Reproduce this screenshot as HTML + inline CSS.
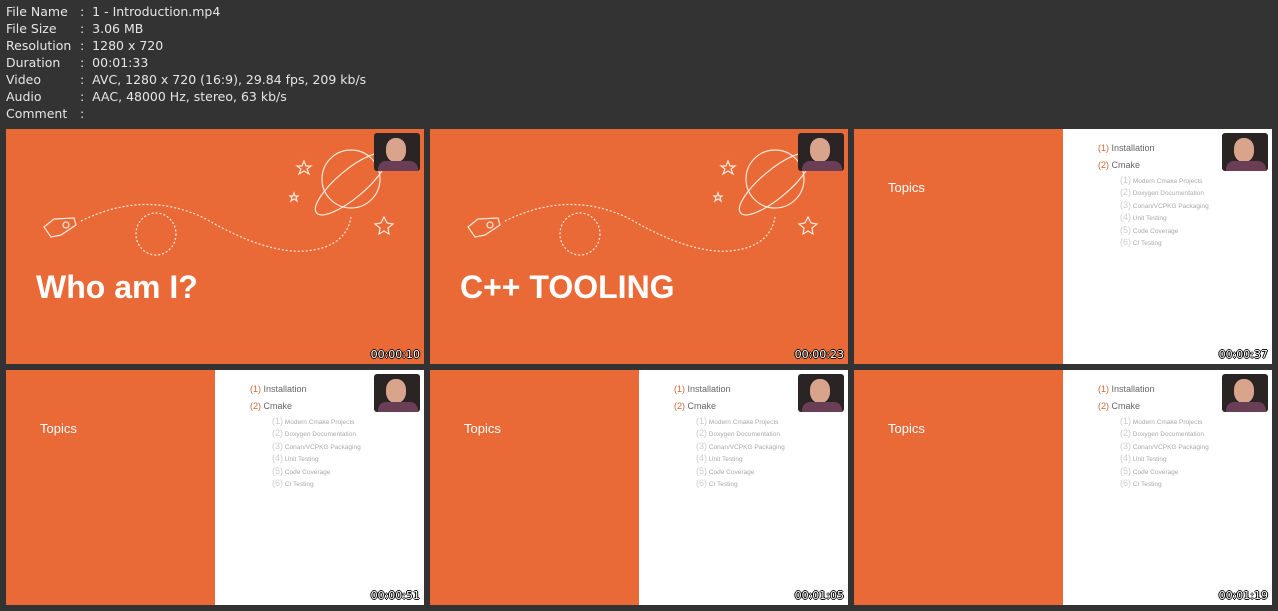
<!DOCTYPE html>
<html><head><meta charset="utf-8"><style>
body{margin:0;width:1278px;height:611px;background:#333333;overflow:hidden;font-family:"DejaVu Sans","Liberation Sans",sans-serif;position:relative}
.h{position:absolute;left:6px;color:#e6e6e6;font-size:12.5px;line-height:17px;white-space:pre}
.h span{position:absolute;left:74px}
.t{position:absolute;width:418px;height:235px;background:#e96a36;overflow:hidden}
.w{position:absolute;left:209px;top:0;width:209px;height:235px;background:#fff}
.cam{position:absolute;left:368px;top:4px;width:46px;height:38px;border-radius:3px;background:#2a2424;overflow:hidden}
.ts{position:absolute;right:4px;bottom:3px;color:#fff;font-size:11px;font-family:"DejaVu Sans","Liberation Sans",sans-serif;text-shadow:-1px 0 #000,1px 0 #000,0 1px #000,0 -1px #000}
.big{position:absolute;left:30px;top:140px;color:#fff;font-size:32px;font-weight:bold;font-family:"Liberation Sans",sans-serif}
.tp{position:absolute;left:34px;top:51px;color:#fff;font-size:13px;font-family:"Liberation Sans",sans-serif}
.l{position:absolute;font-size:9px;color:#666;white-space:nowrap;font-family:"Liberation Sans",sans-serif}
.l b{color:#d0663a;font-weight:normal}
.s{position:absolute;font-size:6.5px;color:#aaa;white-space:nowrap;font-family:"Liberation Sans",sans-serif}
.s i{font-style:normal;font-size:9px;color:#ccc}
</style></head><body>
<div class="h" style="top:3px">File Name<span>:  1 - Introduction.mp4</span></div>
<div class="h" style="top:20px">File Size<span>:  3.06 MB</span></div>
<div class="h" style="top:37px">Resolution<span>:  1280 x 720</span></div>
<div class="h" style="top:54px">Duration<span>:  00:01:33</span></div>
<div class="h" style="top:71px">Video<span>:  AVC, 1280 x 720 (16:9), 29.84 fps, 209 kb/s</span></div>
<div class="h" style="top:88px">Audio<span>:  AAC, 48000 Hz, stereo, 63 kb/s</span></div>
<div class="h" style="top:105px">Comment<span>:</span></div>

<div class="t" style="left:6px;top:129px">
<svg width="418" height="235" style="position:absolute;left:0;top:0" fill="none" stroke="#fde9dd" stroke-width="1.2">
<path d="M75 92 Q140 60 200 90 Q260 125 300 122 Q340 118 345 88" stroke-dasharray="2 2"/>
<ellipse cx="150" cy="105" rx="20" ry="21" stroke-dasharray="2 2"/>
<path d="M38 98 L48 90 L68 89 L70 96 L55 106 L45 108 Z"/><circle cx="60" cy="96" r="3"/>
<circle cx="345" cy="50" r="29"/><ellipse cx="345" cy="55" rx="45" ry="14" transform="rotate(-40 345 55)"/>
<path d="M298 32 l2 5 5 0 -4 3 2 5 -5 -3 -5 3 2 -5 -4 -3 5 0z"/>
<path d="M378 88 l3 6 6 1 -5 4 1 6 -5 -3 -5 3 1 -6 -5 -4 6 -1z"/>
<path d="M288 64 l1 3 3 0 -2 2 1 3 -3 -2 -3 2 1 -3 -2 -2 3 0z"/>
</svg>
<div class="big">Who am I?</div>
<div class="cam"><div style="position:absolute;left:12px;top:5px;width:20px;height:24px;border-radius:45%;background:#d9a48c"></div><div style="position:absolute;left:4px;top:28px;width:40px;height:14px;background:#6a3f55;border-radius:8px 8px 0 0"></div></div>
<div class="ts">00:00:10</div></div>

<div class="t" style="left:430px;top:129px">
<svg width="418" height="235" style="position:absolute;left:0;top:0" fill="none" stroke="#fde9dd" stroke-width="1.2">
<path d="M75 92 Q140 60 200 90 Q260 125 300 122 Q340 118 345 88" stroke-dasharray="2 2"/>
<ellipse cx="150" cy="105" rx="20" ry="21" stroke-dasharray="2 2"/>
<path d="M38 98 L48 90 L68 89 L70 96 L55 106 L45 108 Z"/><circle cx="60" cy="96" r="3"/>
<circle cx="345" cy="50" r="29"/><ellipse cx="345" cy="55" rx="45" ry="14" transform="rotate(-40 345 55)"/>
<path d="M298 32 l2 5 5 0 -4 3 2 5 -5 -3 -5 3 2 -5 -4 -3 5 0z"/>
<path d="M378 88 l3 6 6 1 -5 4 1 6 -5 -3 -5 3 1 -6 -5 -4 6 -1z"/>
<path d="M288 64 l1 3 3 0 -2 2 1 3 -3 -2 -3 2 1 -3 -2 -2 3 0z"/>
</svg>
<div class="big">C++ TOOLING</div>
<div class="cam"><div style="position:absolute;left:12px;top:5px;width:20px;height:24px;border-radius:45%;background:#d9a48c"></div><div style="position:absolute;left:4px;top:28px;width:40px;height:14px;background:#6a3f55;border-radius:8px 8px 0 0"></div></div>
<div class="ts">00:00:23</div></div>

<div class="t" style="left:854px;top:129px"><div class="w"></div><div class="tp">Topics</div>
<div class="l" style="left:244px;top:14px"><b>(1)</b> Installation</div>
<div class="l" style="left:244px;top:31px"><b>(2)</b> Cmake</div>
<div class="s" style="left:266px;top:46px"><i>(1)</i> Modern Cmake Projects</div>
<div class="s" style="left:266px;top:58px"><i>(2)</i> Doxygen Documentation</div>
<div class="s" style="left:266px;top:71px"><i>(3)</i> Conan/VCPKG Packaging</div>
<div class="s" style="left:266px;top:83px"><i>(4)</i> Unit Testing</div>
<div class="s" style="left:266px;top:96px"><i>(5)</i> Code Coverage</div>
<div class="s" style="left:266px;top:108px"><i>(6)</i> CI Testing</div>
<div class="cam"><div style="position:absolute;left:12px;top:5px;width:20px;height:24px;border-radius:45%;background:#d9a48c"></div><div style="position:absolute;left:4px;top:28px;width:40px;height:14px;background:#6a3f55;border-radius:8px 8px 0 0"></div></div>
<div class="ts">00:00:37</div></div>

<div class="t" style="left:6px;top:370px"><div class="w"></div><div class="tp">Topics</div>
<div class="l" style="left:244px;top:14px"><b>(1)</b> Installation</div>
<div class="l" style="left:244px;top:31px"><b>(2)</b> Cmake</div>
<div class="s" style="left:266px;top:46px"><i>(1)</i> Modern Cmake Projects</div>
<div class="s" style="left:266px;top:58px"><i>(2)</i> Doxygen Documentation</div>
<div class="s" style="left:266px;top:71px"><i>(3)</i> Conan/VCPKG Packaging</div>
<div class="s" style="left:266px;top:83px"><i>(4)</i> Unit Testing</div>
<div class="s" style="left:266px;top:96px"><i>(5)</i> Code Coverage</div>
<div class="s" style="left:266px;top:108px"><i>(6)</i> CI Testing</div>
<div class="cam"><div style="position:absolute;left:12px;top:5px;width:20px;height:24px;border-radius:45%;background:#d9a48c"></div><div style="position:absolute;left:4px;top:28px;width:40px;height:14px;background:#6a3f55;border-radius:8px 8px 0 0"></div></div>
<div class="ts">00:00:51</div></div>

<div class="t" style="left:430px;top:370px"><div class="w"></div><div class="tp">Topics</div>
<div class="l" style="left:244px;top:14px"><b>(1)</b> Installation</div>
<div class="l" style="left:244px;top:31px"><b>(2)</b> Cmake</div>
<div class="s" style="left:266px;top:46px"><i>(1)</i> Modern Cmake Projects</div>
<div class="s" style="left:266px;top:58px"><i>(2)</i> Doxygen Documentation</div>
<div class="s" style="left:266px;top:71px"><i>(3)</i> Conan/VCPKG Packaging</div>
<div class="s" style="left:266px;top:83px"><i>(4)</i> Unit Testing</div>
<div class="s" style="left:266px;top:96px"><i>(5)</i> Code Coverage</div>
<div class="s" style="left:266px;top:108px"><i>(6)</i> CI Testing</div>
<div class="cam"><div style="position:absolute;left:12px;top:5px;width:20px;height:24px;border-radius:45%;background:#d9a48c"></div><div style="position:absolute;left:4px;top:28px;width:40px;height:14px;background:#6a3f55;border-radius:8px 8px 0 0"></div></div>
<div class="ts">00:01:05</div></div>

<div class="t" style="left:854px;top:370px"><div class="w"></div><div class="tp">Topics</div>
<div class="l" style="left:244px;top:14px"><b>(1)</b> Installation</div>
<div class="l" style="left:244px;top:31px"><b>(2)</b> Cmake</div>
<div class="s" style="left:266px;top:46px"><i>(1)</i> Modern Cmake Projects</div>
<div class="s" style="left:266px;top:58px"><i>(2)</i> Doxygen Documentation</div>
<div class="s" style="left:266px;top:71px"><i>(3)</i> Conan/VCPKG Packaging</div>
<div class="s" style="left:266px;top:83px"><i>(4)</i> Unit Testing</div>
<div class="s" style="left:266px;top:96px"><i>(5)</i> Code Coverage</div>
<div class="s" style="left:266px;top:108px"><i>(6)</i> CI Testing</div>
<div class="cam"><div style="position:absolute;left:12px;top:5px;width:20px;height:24px;border-radius:45%;background:#d9a48c"></div><div style="position:absolute;left:4px;top:28px;width:40px;height:14px;background:#6a3f55;border-radius:8px 8px 0 0"></div></div>
<div class="ts">00:01:19</div></div>
</body></html>
